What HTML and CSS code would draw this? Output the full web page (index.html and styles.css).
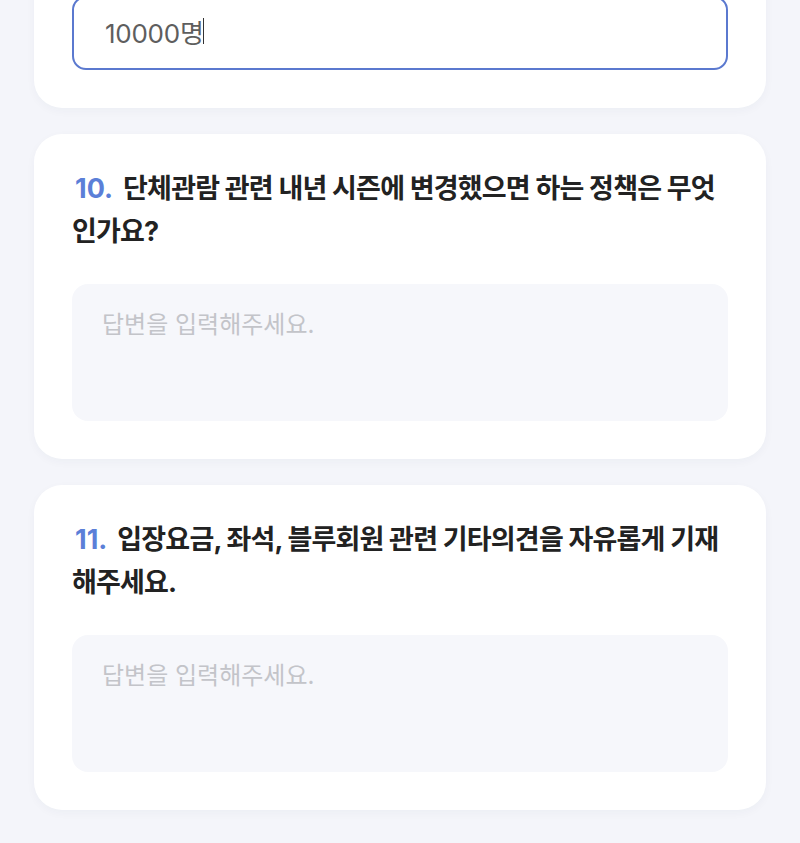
FILE: index.html
```html
<!DOCTYPE html>
<html lang="ko">
<head>
<meta charset="utf-8">
<title>설문</title>
<link rel="stylesheet" href="styles.css">
</head>
<body>
<main class="page">
  <section class="card card-cut">
    <div class="field field-active"><span class="field-value">10000명</span><span class="caret"></span></div>
  </section>
  <section class="card">
    <h2 class="question"><span class="qnum">10.</span><span class="qtext">단체관람 관련 내년 시즌에 변경했으면 하는 정책은 무엇인가요?</span></h2>
    <div class="answer"><span class="placeholder">답변을 입력해주세요.</span></div>
  </section>
  <section class="card">
    <h2 class="question"><span class="qnum">11.</span><span class="qtext">입장요금, 좌석, 블루회원 관련 기타의견을 자유롭게 기재해주세요.</span></h2>
    <div class="answer"><span class="placeholder">답변을 입력해주세요.</span></div>
  </section>
</main>
</body>
</html>
```

FILE: styles.css
```css
* { box-sizing: border-box; }
html, body {
  margin: 0;
  padding: 0;
  background: #f4f5fa;
}
body {
  font-family: "Inter", "Noto Sans CJK KR", sans-serif;
  color: #222;
  overflow: hidden;
  height: 843px;
}
.page {
  display: flex;
  flex-direction: column;
  gap: 26px;
  padding: 0 34px;
}
.card {
  background: #ffffff;
  border-radius: 28px;
  padding: 33px 38px 38px;
  box-shadow: 0 3px 10px rgba(40, 50, 90, 0.035);
}
.card-cut {
  margin-top: -42px;
  padding-top: 38px;
}
.field {
  height: 74px;
  border-radius: 14px;
  border: 2px solid #5b79cf;
  display: flex;
  align-items: center;
  padding: 0 31px 4px;
  font-size: 26px;
  color: #5e5e5e;
  letter-spacing: -0.01em;
}
.caret {
  display: inline-block;
  width: 1.5px;
  height: 26px;
  background: #333;
  margin-left: -1px;
}
.question {
  margin: 0;
  font-size: 27px;
  line-height: 43px;
  font-weight: 700;
  color: #222;
}
.qtext {
  letter-spacing: -0.03em;
}
.qnum {
  display: inline-block;
  color: #5b7fd8;
  margin-left: 3px;
  margin-right: 10px;
}
.answer {
  margin-top: 31px;
  height: 137px;
  border-radius: 16px;
  background: #f6f7fb;
  padding: 25px 30px;
}
.placeholder {
  font-size: 24px;
  line-height: 32px;
  color: #c3c4c9;
}
```
